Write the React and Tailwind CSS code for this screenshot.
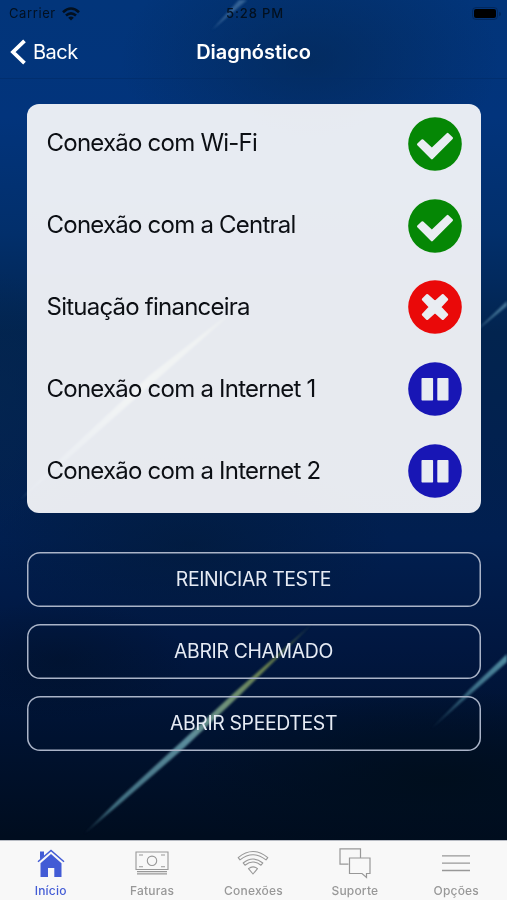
import React from "react";

const FONT = "font-['Inter','Liberation_Sans',sans-serif]";

function Backdrop() {
  return (
    <svg className="absolute inset-0 h-full w-full" viewBox="0 0 507 900" aria-hidden="true">
      <defs>
        <linearGradient id="base" x1="0" y1="0" x2="0" y2="1">
          <stop offset="0" stopColor="#02357a" />
          <stop offset="0.13" stopColor="#02347c" />
          <stop offset="0.26" stopColor="#022f6b" />
          <stop offset="0.37" stopColor="#02244f" />
          <stop offset="0.48" stopColor="#02214f" />
          <stop offset="0.6" stopColor="#011f50" />
          <stop offset="0.72" stopColor="#011740" />
          <stop offset="0.82" stopColor="#001230" />
          <stop offset="0.93" stopColor="#000d1f" />
        </linearGradient>
        <radialGradient id="shade">
          <stop offset="0" stopColor="#042650" stopOpacity="0.6" />
          <stop offset="1" stopColor="#042650" stopOpacity="0" />
        </radialGradient>
        <radialGradient id="dusk">
          <stop offset="0" stopColor="#021a38" stopOpacity="0.6" />
          <stop offset="1" stopColor="#021a38" stopOpacity="0" />
        </radialGradient>
        <radialGradient id="night">
          <stop offset="0" stopColor="#000e1c" stopOpacity="0.9" />
          <stop offset="1" stopColor="#000e1c" stopOpacity="0" />
        </radialGradient>
        <linearGradient id="rayMain" gradientUnits="userSpaceOnUse" x1="85" y1="833" x2="312" y2="625">
          <stop offset="0" stopColor="#4f8596" stopOpacity="0.25" />
          <stop offset="0.12" stopColor="#4f8596" stopOpacity="0.8" />
          <stop offset="0.45" stopColor="#5b8c9c" />
          <stop offset="0.62" stopColor="#6f9279" />
          <stop offset="0.8" stopColor="#748b50" stopOpacity="0.9" />
          <stop offset="1" stopColor="#5d7448" stopOpacity="0.5" />
        </linearGradient>
        <linearGradient id="rayRight" gradientUnits="userSpaceOnUse" x1="432" y1="728" x2="507" y2="656">
          <stop offset="0" stopColor="#4f8ba0" stopOpacity="0.2" />
          <stop offset="0.6" stopColor="#4f8ba0" stopOpacity="0.8" />
          <stop offset="1" stopColor="#4f8ba0" />
        </linearGradient>
        <linearGradient id="rayCard" gradientUnits="userSpaceOnUse" x1="20" y1="499" x2="250" y2="300">
          <stop offset="0" stopColor="#5f93a8" stopOpacity="0.35" />
          <stop offset="0.5" stopColor="#b9cf9f" />
          <stop offset="0.8" stopColor="#b9cf8f" stopOpacity="0.8" />
          <stop offset="1" stopColor="#a9bf7f" stopOpacity="0.1" />
        </linearGradient>
        <filter id="soft" x="-10%" y="-10%" width="120%" height="120%">
          <feGaussianBlur stdDeviation="0.8" />
        </filter>
      </defs>
      <rect width="507" height="900" fill="url(#base)" />
      <ellipse cx="310" cy="60" rx="190" ry="120" fill="url(#shade)" />
      <ellipse cx="190" cy="545" rx="200" ry="90" fill="url(#dusk)" />
      <ellipse cx="0" cy="400" rx="60" ry="130" fill="url(#shade)" />
      <ellipse cx="440" cy="780" rx="260" ry="90" fill="url(#night)" />
      <ellipse cx="60" cy="660" rx="130" ry="60" fill="url(#night)" opacity="0.4" />
      <g filter="url(#soft)">
        <path d="M84 834L120 798L180 743L235 692L312 624L240 695L184 748L122 802Z" fill="url(#rayMain)" />
        <path d="M431 729L470 689L507 654V662L473 692Z" fill="url(#rayRight)" />
        <path d="M476 331L507 301V306Z" fill="#4a7c9c" opacity="0.9" />
        <path d="M20 500L60 459L150 375L250 297L155 381L64 462Z" fill="url(#rayCard)" />
        <path d="M212 30L239 0H247Z" fill="#4a77a5" opacity="0.7" />
      </g>
    </svg>
  );
}

function StatusBar() {
  return (
    <div className="flex h-[27px] items-center justify-between pr-[6px] pl-[9px] text-[13px] text-[#03101f]">
      <div className="flex w-[120px] items-center gap-[6px]">
        <span className="tracking-[0.6px]">Carrier</span>
        <svg className="h-[14px] w-[18px]" viewBox="0 0 18 14">
          <g fill="none" stroke="currentColor" strokeWidth="2.6">
            <path d="M1 5.2Q9-2.2 17 5.2" />
            <path d="M4 8.6Q9 4.2 14 8.6" />
          </g>
          <path d="M6.2 10.7Q9 8.3 11.8 10.7L9 13.6Z" fill="currentColor" />
        </svg>
      </div>
      <span className="font-medium tracking-[0.85px]">5:28 PM</span>
      <div className="flex w-[120px] items-center justify-end gap-[1px]">
        <div className="rounded-[4px] border border-[#03204a]/60 p-px">
          <div className="h-[9px] w-[22px] rounded-[2px] bg-black" />
        </div>
        <div className="h-1 w-[2px] rounded-r bg-[#03204a]/60" />
      </div>
    </div>
  );
}

function NavBar() {
  return (
    <div className="grid h-[52px] grid-cols-3 items-center border-b border-[#022c68]/60 pb-[2px] text-[20px] text-white">
      <div className="flex items-center gap-[6px] pl-[10px]">
        <svg className="h-[26px] w-[17px]" viewBox="0 0 17 26" fill="none">
          <path d="M14.5 1.8L3 13L14.5 24.2" stroke="currentColor" strokeWidth="3.8" />
        </svg>
        <span className="tracking-[-0.5px]">Back</span>
      </div>
      <h1 className="text-center font-semibold tracking-[-0.05px]">Diagnóstico</h1>
    </div>
  );
}

function StatusIcon({ kind }) {
  const fill = { ok: "#058705", fail: "#ea0909", wait: "#1816b5" }[kind];
  return (
    <svg className="h-[54px] w-[54px]" viewBox="0 0 54 54">
      <circle cx="27" cy="27" r="26.8" fill={fill} />
      <g fill="#e9edf2" stroke="#e9edf2" strokeWidth="2.4" strokeLinejoin="round">
        {kind === "ok" && <path d="M10.2 27.4L14.4 23.4L23.9 32.2L39.6 17L43.8 21.2L23.9 41.2Z" />}
        {kind === "fail" && (
          <path d="M19.2 15.2L27 22.2L34.8 15.2L39 19.4L32 27L39 34.6L34.8 38.8L27 31.8L19.2 38.8L15 34.6L22 27L15 19.4Z" />
        )}
        {kind === "wait" && (
          <g strokeWidth="1.4">
            <path d="M14.2 16.8H24.4V37.8H14.2Z" />
            <path d="M30 16.8H39.8V37.8H30Z" />
          </g>
        )}
      </g>
    </svg>
  );
}

const CHECKS = [
  ["Conexão com Wi-Fi", "ok"],
  ["Conexão com a Central", "ok"],
  ["Situação financeira", "fail"],
  ["Conexão com a Internet 1", "wait"],
  ["Conexão com a Internet 2", "wait"],
];

const ACTIONS = ["REINICIAR TESTE", "ABRIR CHAMADO", "ABRIR SPEEDTEST"];

const TABS = [
  {
    label: "Início",
    active: true,
    icon: (
      <>
        <path d="M4.5 15.3L15 6L25.5 15.3V29H18.3V20H12V29H4.5Z" fill="currentColor" />
        <path d="M4 3.5H8V8L4 11.5Z" fill="currentColor" />
        <path d="M2 13.7L15 2.4L28 13.7" fill="none" stroke="currentColor" strokeWidth="1.5" />
      </>
    ),
  },
  {
    label: "Faturas",
    icon: (
      <g fill="none" stroke="currentColor" strokeWidth="1.1">
        <path d="M-1 4H31V21.5H-1Z" />
        <circle cx="15" cy="12.8" r="4.7" />
        <path d="M2 7H6M24 7H28M2 18.7H6M24 18.7H28" />
        <path d="M0 23.7H30M0 25.9H30" strokeWidth="1.2" />
      </g>
    ),
  },
  {
    label: "Conexões",
    icon: (
      <g fill="none" stroke="currentColor" strokeWidth="1.1" strokeLinejoin="round">
        <path d="M.2 9.6Q15-2.6 29.8 9.6L28 11.9Q15 1.5 2 11.9Z" />
        <path d="M5.2 15Q15 7.1 24.8 15L23 17.2Q15 10.8 7 17.2Z" />
        <path d="M10.5 20.7Q15 17 19.5 20.7L15 26Z" />
      </g>
    ),
  },
  {
    label: "Suporte",
    icon: (
      <g fill="none" stroke="currentColor" strokeWidth="1.2">
        <path d="M8.5 16.2H0V.8H20.5V10" />
        <path d="M9.5 10H30V25.5H26.5V29.5L22 25.5H9.5Z" />
      </g>
    ),
  },
  {
    label: "Opções",
    icon: <path d="M1 7.8H29M1 15.2H29M1 22.5H29" fill="none" stroke="currentColor" strokeWidth="1.3" />,
  },
];

export default function App() {
  return (
    <div className={`relative h-[900px] w-[507px] overflow-hidden ${FONT}`}>
      <Backdrop />
      <div className="relative flex h-full flex-col">
        <StatusBar />
        <NavBar />
        <main className="flex flex-1 flex-col px-[26.5px] pt-[24.5px]">
          <section className="flex h-[409px] flex-col rounded-[12px] bg-[#f5f7fa]/94 pr-[19px] pl-[20px]">
            {CHECKS.map(([label, kind]) => (
              <div key={label} className="flex flex-1 items-center justify-between pb-px">
                <span className="pb-px text-[24px] tracking-[-0.77px] text-[#0c0f14]">{label}</span>
                <StatusIcon kind={kind} />
              </div>
            ))}
          </section>
          <div className="mt-[39px] flex flex-col gap-[17px]">
            {ACTIONS.map((label) => (
              <button
                key={label}
                className="h-[55px] rounded-[13px] pt-[2px] text-[19.4px] tracking-[-0.35px] text-[#e6ebf4] shadow-[inset_0_0_0_1.5px_#aab4c8]"
              >
                {label}
              </button>
            ))}
          </div>
        </main>
        <nav className="grid h-[60px] grid-cols-5 border-t border-[#b8bcc4] bg-[#f8f8f8]">
          {TABS.map((tab) => (
            <div
              key={tab.label}
              className={`flex flex-col items-center pt-[7px] ${tab.active ? "text-[#425bd5]" : "text-[#989898]"}`}
            >
              <svg className="h-[30px] w-[30px] overflow-visible" viewBox="0 0 30 30">
                {tab.icon}
              </svg>
              <span className="mt-[5px] text-[12px] leading-4 font-medium tracking-[0.2px]">{tab.label}</span>
            </div>
          ))}
        </nav>
      </div>
    </div>
  );
}
